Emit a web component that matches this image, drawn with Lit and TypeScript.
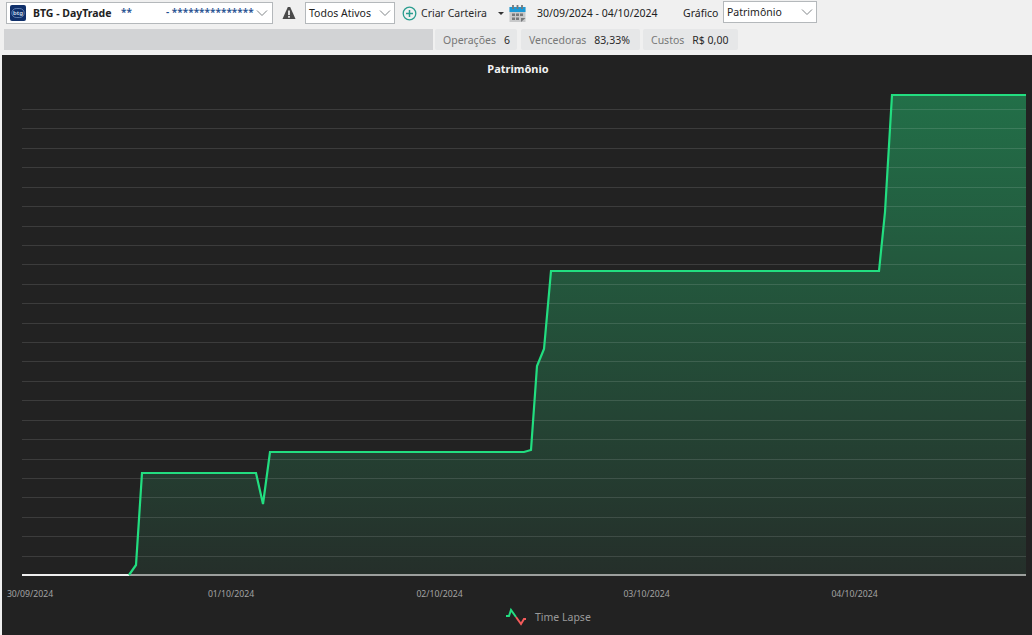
import { LitElement, html, css, svg } from 'lit';
import { customElement } from 'lit/decorators.js';

const LINE: [number, number][] = [
  [22, 575], [129, 575], [136, 565], [142, 473], [256, 473], [263, 504], [270, 452],
  [524, 452], [531, 450], [537, 366], [544, 349], [551, 271], [879, 271], [885, 212],
  [892, 95], [1026, 95],
];
const BASE_Y = 575;
const GRID = Array.from({ length: 24 }, (_, i) => 109 + i * 19.42);
const DATES: [string, number][] = [
  ['30/09/2024', 30],
  ['01/10/2024', 231],
  ['02/10/2024', 439.5],
  ['03/10/2024', 646.5],
  ['04/10/2024', 854.5],
];

@customElement('app-root')
export class AppRoot extends LitElement {
  static styles = css`
    :host {
      display: block;
      width: 1032px;
      height: 635px;
      overflow: hidden;
      background: #f0f0f0;
      font-family: 'Noto Sans', 'Open Sans', sans-serif;
      font-size: 10.5px;
      color: #222;
    }
    .toolbar {
      display: flex;
      align-items: center;
      height: 26px;
      padding-left: 6px;
    }
    .select {
      display: flex;
      align-items: center;
      box-sizing: border-box;
      height: 22px;
      background: #fff;
      border: 1px solid #b4b8bb;
      flex: none;
    }
    .select svg {
      flex: none;
    }
    .account {
      width: 267px;
      padding-left: 3px;
    }
    .account b {
      font-weight: 700;
      margin-left: 7px;
      width: 88px;
      white-space: nowrap;
    }
    .stars {
      color: #1f4f8f;
      font-size: 10px;
      font-weight: 600;
      white-space: nowrap;
      margin-top: -3px;
    }
    .stars.a {
      width: 45px;
    }
    .stars.b {
      width: 90px;
    }
    .warn {
      margin: 0 9px 0 9px;
      flex: none;
    }
    .assets {
      width: 90px;
      padding-left: 3px;
      justify-content: space-between;
    }
    .assets span,
    .chart-select span {
      white-space: nowrap;
    }
    .assets svg,
    .chart-select svg {
      margin-right: 3px;
    }
    .create {
      display: flex;
      align-items: center;
      margin-left: 7px;
      gap: 4px;
      width: 107px;
      flex: none;
      color: #2b2b2b;
    }
    .caret {
      width: 0;
      height: 0;
      border: 3px solid transparent;
      border-top: 3px solid #333;
      border-bottom: 0;
      margin-left: 7px;
    }
    .dates {
      margin-left: 11px;
      white-space: nowrap;
      width: 146px;
    }
    .chart-label {
      width: 40px;
      white-space: nowrap;
    }
    .chart-select {
      width: 94px;
      padding-left: 3px;
      justify-content: space-between;
      margin-bottom: 2px;
    }
    .stats {
      display: flex;
      align-items: stretch;
      height: 21px;
      margin-top: 3px;
      padding-left: 4px;
      gap: 3px;
    }
    .masked {
      width: 429px;
      background: #d2d3d5;
      margin-right: -1px;
    }
    .stat {
      display: flex;
      align-items: center;
      gap: 8px;
      box-sizing: border-box;
      padding: 0 8px;
      background: #e6e7e8;
      border-radius: 2px;
      color: #777;
      white-space: nowrap;
    }
    .stat b {
      font-weight: 400;
      color: #2a2a2a;
    }
    .ops {
      width: 82px;
      margin-right: 1px;
    }
    .wins {
      width: 119px;
    }
    .costs {
      width: 95px;
    }
    .panel {
      margin: 5px 0 0 2px;
      height: 580px;
      background: #222;
      display: flex;
      flex-direction: column;
    }
    .panel svg {
      display: block;
    }
    .axis {
      font-family: 'Noto Sans', 'Open Sans', sans-serif;
      font-size: 8.7px;
      fill: #a3a3a3;
    }
    .title {
      font-family: 'Noto Sans', 'Open Sans', sans-serif;
      font-size: 11px;
      font-weight: 700;
      fill: #f2f2f2;
    }
    .legend {
      font-family: 'Noto Sans', 'Open Sans', sans-serif;
      font-size: 10.5px;
      fill: #9a9a9a;
    }
    .logo {
      font-family: 'Noto Sans', sans-serif;
      font-size: 6px;
      font-weight: 600;
      fill: #d7e2f2;
    }
  `;

  private chevron() {
    return html`<svg width="12" height="8" viewBox="0 0 12 8" fill="none" stroke="#808588" stroke-width="1">
      <path d="M1 1.5 6 6.5 11 1.5" />
    </svg>`;
  }

  private chart() {
    const first = LINE.findIndex(p => p[0] === 129);
    const area = `129,${BASE_Y} ` + LINE.slice(first + 1).map(p => p.join(',')).join(' ') + ` 1026,${BASE_Y}`;
    return html`<svg width="1030" height="580" viewBox="2 55 1030 580">
      <defs>
        <linearGradient id="fill" gradientUnits="userSpaceOnUse" x1="0" y1="95" x2="0" y2="575">
          <stop offset="0" stop-color="#226f48" />
          <stop offset="1" stop-color="#252f2a" />
        </linearGradient>
      </defs>
      <text class="title" x="518" y="73" text-anchor="middle">Patrimônio</text>
      <polygon points=${area} fill="url(#fill)" />
      ${GRID.map(
        y => svg`<line x1="22" x2="1026" y1=${Math.round(y) + 0.5} y2=${Math.round(y) + 0.5}
          stroke="rgba(255,255,255,0.12)" />`,
      )}
      <line x1="22" x2="129" y1="575" y2="575" stroke="#eeeeee" stroke-width="2" />
      <line x1="129" x2="1026" y1="575" y2="575" stroke="#9c9f9d" stroke-width="2" />
      <polyline points=${LINE.slice(first).map(p => p.join(',')).join(' ')} fill="none"
        stroke="#22de80" stroke-width="2.2" stroke-linejoin="miter" />
      ${DATES.map(
        ([d, x]) => svg`<text class="axis" x=${x} y="597" text-anchor="middle">${d}</text>`,
      )}
      <polyline points="506,616 509,616 511,610 516,617" fill="none" stroke="#22de80" stroke-width="2" />
      <polyline points="516,617 521,624 524,619 526,619" fill="none" stroke="#f45b5b" stroke-width="2" />
      <text class="legend" x="535" y="621">Time Lapse</text>
    </svg>`;
  }

  render() {
    return html`
      <div class="toolbar">
        <div class="select account">
          <svg width="16" height="16" viewBox="0 0 16 16">
            <rect width="16" height="16" rx="2" fill="#10306b" />
            <rect x="1.8" y="3.5" width="12.4" height="9" rx="4.5" fill="none" stroke="#7f9cc8" stroke-width=".7" />
            <text class="logo" x="8" y="10" text-anchor="middle">btg</text>
          </svg>
          <b>BTG - DayTrade</b>
          <span class="stars a">**</span>
          <span class="stars b">- ***************</span>
          ${this.chevron()}
        </div>
        <svg class="warn" width="14" height="14" viewBox="0 0 14 14">
          <path d="M5.8 1h2.4L13.5 13H.5Z" fill="#4a4a4a" />
          <rect x="6.1" y="4.5" width="1.8" height="4.6" fill="#f0f0f0" />
          <rect x="6.1" y="10" width="1.8" height="1.7" fill="#f0f0f0" />
        </svg>
        <div class="select assets"><span>Todos Ativos</span>${this.chevron()}</div>
        <div class="create">
          <svg width="15" height="15" viewBox="0 0 15 15" fill="none" stroke="#2a9d8f" stroke-width="1.3">
            <circle cx="7.5" cy="7.5" r="6.3" />
            <path d="M7.5 4v7M4 7.5h7" stroke-width="1.5" />
          </svg>
          <span>Criar Carteira</span>
          <span class="caret"></span>
        </div>
        <svg width="17" height="19" viewBox="0 0 17 19">
          <rect x=".5" y="3" width="16" height="15" fill="#c8c9ca" />
          <rect x=".5" y="3" width="16" height="5" fill="#1c9ad6" />
          <path d="M4 1v4M8.5 1v4M13 1v4" stroke="#77797b" stroke-width="1.8" />
          <path d="M3 9.5h3v2.5H3zM7 9.5h3v2.5H7zM11 9.5h3v2.5h-3zM3 13.5h3V16H3zM7 13.5h3V16H7z" fill="#77797b" />
          <path d="M12 18v-4h4.5z" fill="#77797b" />
        </svg>
        <span class="dates">30/09/2024 - 04/10/2024</span>
        <span class="chart-label">Gráfico</span>
        <div class="select chart-select"><span>Patrimônio</span>${this.chevron()}</div>
      </div>
      <div class="stats">
        <div class="masked"></div>
        <div class="stat ops">Operações <b>6</b></div>
        <div class="stat wins">Vencedoras <b>83,33%</b></div>
        <div class="stat costs">Custos <b>R$ 0,00</b></div>
      </div>
      <div class="panel">${this.chart()}</div>
    `;
  }
}
